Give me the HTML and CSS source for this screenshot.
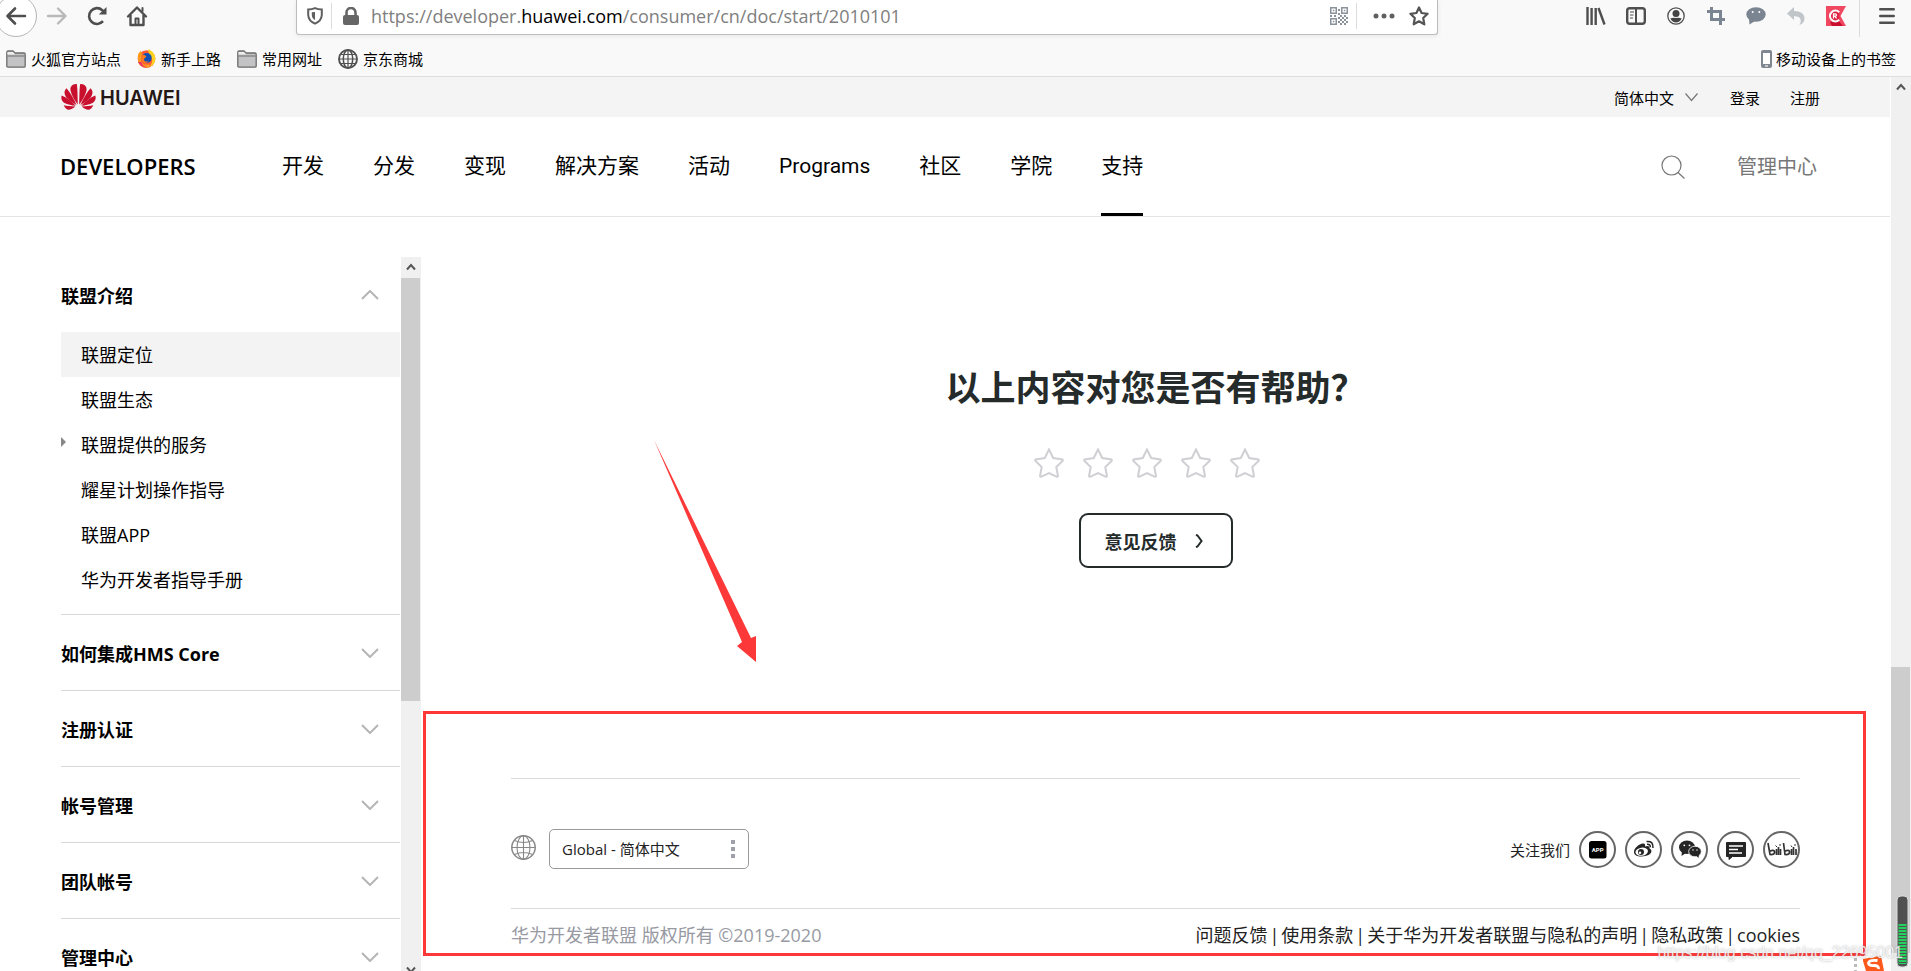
FILE: index.html
```html
<!DOCTYPE html>
<html lang="zh-CN">
<head>
<meta charset="utf-8">
<title>华为开发者联盟</title>
<link rel="stylesheet" href="styles.css">
</head>
<body>
<header class="browser">
  <div class="toolbar">
    <div class="nav-buttons">
      <button class="tool back" aria-label="后退"><svg width="22" height="22" viewBox="0 0 22 22" fill="none" stroke="#4f4f4f" stroke-width="2.6" stroke-linecap="round" stroke-linejoin="round"><path d="M20 11H3M10 3.500L2.500 11L10 18.500"/></svg></button>
      <button class="tool" aria-label="前进"><svg width="22" height="22" viewBox="0 0 22 22" fill="none" stroke="#b9b9b9" stroke-width="2.400" stroke-linecap="round" stroke-linejoin="round"><path d="M2 11H19M12 3.500L19.500 11L12 18.500"/></svg></button>
      <button class="tool" aria-label="刷新"><svg width="22" height="22" viewBox="0 0 22 22" fill="none" stroke="#4f4f4f" stroke-width="2.600"><path d="M17 16.200A7.900 7.900 0 1 1 16.300 5.200L18.500 8"/><path d="M20.500 2V9.600H12.800Z" fill="#4f4f4f" stroke="none"/></svg></button>
      <button class="tool" aria-label="主页"><svg width="22" height="22" viewBox="0 0 22 22" fill="none" stroke="#4f4f4f" stroke-width="2.400" stroke-linejoin="round" stroke-linecap="round"><path d="M2 11.500L11 2.500L20 11.500M4.500 10V20H17.500V10"/><path d="M9.500 19V13.500H12.500V19M16.500 3V6" stroke-width="2"/></svg></button>
    </div>
    <div class="address">
      <svg class="shield" width="16" height="18" viewBox="0 0 16 18" fill="none" stroke="#5f5f5f" stroke-width="2"><path d="M8 1.200Q11 2.600 14.800 2.600V8Q14.500 14 8 16.600Q1.500 14 1.200 8V2.600Q5 2.600 8 1.200Z"/><path d="M8 5V13Q5 11.500 4.800 8V5.300Z" fill="#5f5f5f" stroke="none"/></svg>
      <i class="rule"></i>
      <svg class="lock" width="16" height="18" viewBox="0 0 16 18"><rect y="8" width="16" height="10" rx="2" fill="#666"/><path d="M3.500 9V5.500a4.500 4.500 0 0 1 9 0V9" fill="none" stroke="#666" stroke-width="2.600"/></svg>
      <a class="url" href="#">https://developer.<b>huawei.com</b>/consumer/cn/doc/start/2010101</a>
      <svg class="qr" width="18" height="18" viewBox="0 0 18 18" fill="#8a929c"><path fill-rule="evenodd" d="M0 0H7V7H0ZM1.500 1.500V5.500H5.500V1.500ZM11 0H18V7H11ZM12.500 1.500V5.500H16.500V1.500ZM0 11H7V18H0ZM1.500 12.500V16.500H5.500V12.500Z"/><path d="M2.800 2.800h1.500v1.500H2.800zM13.800 2.800h1.500v1.500h-1.500zM2.800 13.800h1.500v1.500H2.800zM8 2h2v2H8zM8 6h2v2H8zM0 8h2v2H0zM4 8h2v2H4zM10 8h2v2h-2zM14 8h2v2h-2zM8 10h2v2H8zM12 10h2v2h-2zM16 10h2v2h-2zM10 12h2v2h-2zM14 12h2v2h-2zM8 14h2v2H8zM12 14h2v2h-2zM16 14h2v2h-2zM10 16h2v2h-2zM14 16h2v2h-2z"/></svg>
      <i class="rule"></i>
      <button class="tool" aria-label="更多"><svg width="22" height="6" viewBox="0 0 22 6" fill="#606060"><circle cx="3" cy="3" r="2.500"/><circle cx="11" cy="3" r="2.500"/><circle cx="19" cy="3" r="2.500"/></svg></button>
      <button class="tool star-mark" aria-label="收藏"><svg width="20" height="20" viewBox="0 0 20 20" fill="none" stroke="#555" stroke-width="2.200" stroke-linejoin="round"><path d="M10 1.500L12.600 7L18.600 7.800L14.200 12L15.300 18.300L10 15.300L4.700 18.300L5.800 12L1.400 7.800L7.400 7Z"/></svg></button>
    </div>
    <div class="extensions">
      <button class="tool" aria-label="书库"><svg width="20" height="18" viewBox="0 0 20 18" fill="none" stroke="#4f4f4f" stroke-width="2.400"><path d="M1.500 0V18M5.600 1V18M9.700 1V18M12.500 1L18.500 17.500"/></svg></button>
      <button class="tool" aria-label="侧栏"><svg width="20" height="18" viewBox="0 0 20 18" fill="none" stroke="#4f4f4f"><rect x="1.200" y="1.200" width="17.600" height="15.600" rx="2.500" stroke-width="2.400"/><path d="M10 1V17" stroke-width="2"/><path d="M4 5H8M4 8H7.500M4 11H7" stroke-width="1.200"/></svg></button>
      <button class="tool" aria-label="帐户"><svg width="18" height="18" viewBox="0 0 18 18"><circle cx="9" cy="9" r="8.200" fill="none" stroke="#4f4f4f" stroke-width="1.300"/><circle cx="9" cy="6.600" r="3.500" fill="#444"/><path d="M3.300 11.500Q6 10.500 9 11Q12 10.500 14.700 11.500Q12.500 15.500 9 15.500Q5.500 15.500 3.300 11.500Z" fill="#444"/></svg></button>
      <button class="tool" aria-label="截图"><svg width="18" height="18" viewBox="0 0 18 18" fill="none" stroke="#7b8591" stroke-width="3"><path d="M4.500 0V12.500H18M0 4.500H13.500V18"/></svg></button>
      <button class="tool" aria-label="消息"><svg width="20" height="18" viewBox="0 0 20 18"><ellipse cx="10" cy="7.500" rx="9.700" ry="7.300" fill="#7b8591"/><path d="M3 12L3.500 17.500L9 14Z" fill="#7b8591"/><circle cx="6.700" cy="5" r="1" fill="#fff"/><circle cx="13.300" cy="5" r="1" fill="#fff"/></svg></button>
      <button class="tool" aria-label="撤销"><svg width="18" height="18" viewBox="0 0 18 18"><path d="M0 6.500L7 0V4Q17.500 4 17.500 12Q17 16.500 12.500 18Q14.500 15 13.500 12Q12 9 7 9.300V13Z" fill="#c0c5ca"/></svg></button>
      <button class="tool" aria-label="扩展"><svg width="20" height="20" viewBox="0 0 20 20"><path d="M0 0H20L14.500 10L20 20H0Z" fill="#f04860"/><path d="M4 16L12 14L17 20H6Z" fill="#c8102e"/><path d="M13.200 6.200A5.400 5.400 0 1 0 13.200 13.800" fill="#e02040" stroke="#fff" stroke-width="2"/><path d="M7.500 12.500V7.800H9Q10.500 7.800 10.500 9Q10.500 10.200 9 10.200H7.500M9 10.200L10.500 12.500" stroke="#fff" stroke-width="1.300" fill="none"/></svg></button>
      <i class="rule tall"></i>
      <button class="tool menu" aria-label="菜单"><svg width="16" height="18" viewBox="0 0 16 18" stroke="#4f4f4f" stroke-width="2.600" stroke-linecap="round"><path d="M1.300 2.300H14.700M1.300 9H14.700M1.300 15.700H14.700"/></svg></button>
    </div>
  </div>
  <nav class="bookmarks">
    <a href="#"><svg width="20" height="18" viewBox="0 0 20 18"><path d="M.8 16V2.500Q.8 1 2 1H7L9 3H18Q19.200 3 19.200 4.500V16Q19.200 17.200 18 17.200H2Q.8 17.200 .8 16Z" fill="#c3c3c5" stroke="#6c6c6c" stroke-width="1.300"/><path d="M1.500 6H18.500" stroke="#6c6c6c"/><path d="M1.500 2H7L9 4.500H1.500Z" fill="#eee"/></svg>火狐官方站点</a>
    <a href="#"><svg width="19" height="19" viewBox="0 0 19 19"><circle cx="9.500" cy="10" r="8.800" fill="#ff5a36"/><path d="M11.500 0Q18.600 4 18.400 10Q18 16 12 18Q17 13 14 8Q11 5 11.500 0Z" fill="#ffd21f"/><path d="M.8 8Q1 4 3.500 2L5 4L4 13Q7 17 12 15L13 18Q5 20.500 1.500 14Z" fill="#ff9a1f"/><path d="M1 13Q4 19 11 18.700Q6 18 4 13Z" fill="#f02f70"/><circle cx="9.700" cy="9" r="5" fill="#124fb5"/><path d="M4.500 6Q8 5 9.500 8Q6 9 7.500 12Q9 13 12 12Q9 15.500 5.500 13Q3.500 10 4.500 6Z" fill="#ff7a1c"/></svg>新手上路</a>
    <a href="#"><svg width="20" height="18" viewBox="0 0 20 18"><path d="M.8 16V2.500Q.8 1 2 1H7L9 3H18Q19.200 3 19.200 4.500V16Q19.200 17.200 18 17.200H2Q.8 17.200 .8 16Z" fill="#c3c3c5" stroke="#6c6c6c" stroke-width="1.300"/><path d="M1.500 6H18.500" stroke="#6c6c6c"/><path d="M1.500 2H7L9 4.500H1.500Z" fill="#eee"/></svg>常用网址</a>
    <a href="#"><svg width="20" height="20" viewBox="0 0 20 20" fill="none" stroke="#505050" stroke-width="1.500"><circle cx="10" cy="10" r="9" stroke-width="1.900"/><ellipse cx="10" cy="10" rx="4.700" ry="9"/><path d="M1 10H19M3 5.500H17M3 14.500H17M10 1V19" stroke-width="1.200"/></svg>京东商城</a>
    <a class="mobile" href="#"><svg width="11" height="18" viewBox="0 0 11 18"><rect width="11" height="18" rx="2" fill="#7f8790"/><rect x="2" y="3" width="7" height="11" fill="#fff"/><rect x="4" y="15.200" width="3" height="1.500" fill="#ddd"/></svg>移动设备上的书签</a>
  </nav>
</header>

<div class="viewport">
  <div class="page">
    <div class="topbar">
      <a class="brand" href="#" aria-label="HUAWEI">
        <svg width="35" height="26" viewBox="0 0 35 26" fill="#c8102e"><g id="petals"><path d="M16.800 20.500C16.600 12 16.500 4 15.800 0C11 -.2 9 2.800 9.500 6.500C10.500 11 13.500 16.500 16.800 20.500Z"/><path d="M15.600 21C12.500 14 9 8 5.500 4.200C3.500 5.800 3 8.500 4 11C5.500 15 11 18.500 15.600 21Z"/><path d="M14.800 21.700C10.500 17.500 5.500 13.500 .8 11.500C-.3 14 .5 17 3.500 19C6 20.500 11 21.500 14.800 21.700Z"/><path d="M14.200 22.500C10 22.300 6 22 2.700 21.200C4 24.500 6.500 26.300 9 25.500C11 25 13 23.800 14.200 22.500Z"/></g><use href="#petals" transform="matrix(-1 0 0 1 35 0)"/></svg>
        <span>HUAWEI</span>
      </a>
      <div class="account">
        <button class="lang">简体中文<svg width="13" height="9" viewBox="0 0 13 9" fill="none" stroke="#777" stroke-width="1.200"><path d="M.5 .5L6.500 7.500L12.500 .5"/></svg></button>
        <a href="#">登录</a>
        <a href="#">注册</a>
      </div>
    </div>
    <div class="header">
      <a class="site" href="#">DEVELOPERS</a>
      <nav class="menu-main">
        <a href="#">开发</a><a href="#">分发</a><a href="#">变现</a><a href="#">解决方案</a><a href="#">活动</a><a href="#">Programs</a><a href="#">社区</a><a href="#">学院</a><a class="current" href="#">支持</a>
      </nav>
      <button class="search" aria-label="搜索"><svg width="24" height="24" viewBox="0 0 24 24" fill="none" stroke="#777" stroke-width="1.200"><circle cx="10.500" cy="10.500" r="9.500"/><path d="M17 17.500L23.500 23.500"/></svg></button>
      <a class="console" href="#">管理中心</a>
    </div>

    <div class="body">
      <aside class="sidebar">
        <div class="tree">
          <section>
            <button class="group">联盟介绍<svg width="18" height="10" viewBox="0 0 18 10"><path d="M1 9L9 1L17 9"/></svg></button>
            <ul>
              <li class="active"><a href="#">联盟定位</a></li>
              <li><a href="#">联盟生态</a></li>
              <li class="parent"><a href="#">联盟提供的服务</a></li>
              <li><a href="#">耀星计划操作指导</a></li>
              <li><a href="#">联盟APP</a></li>
              <li><a href="#">华为开发者指导手册</a></li>
            </ul>
          </section>
          <section><button class="group">如何集成HMS Core<svg width="18" height="10" viewBox="0 0 18 10"><path d="M1 1L9 9L17 1"/></svg></button></section>
          <section><button class="group">注册认证<svg width="18" height="10" viewBox="0 0 18 10"><path d="M1 1L9 9L17 1"/></svg></button></section>
          <section><button class="group">帐号管理<svg width="18" height="10" viewBox="0 0 18 10"><path d="M1 1L9 9L17 1"/></svg></button></section>
          <section><button class="group">团队帐号<svg width="18" height="10" viewBox="0 0 18 10"><path d="M1 1L9 9L17 1"/></svg></button></section>
          <section><button class="group">管理中心<svg width="18" height="10" viewBox="0 0 18 10"><path d="M1 1L9 9L17 1"/></svg></button></section>
        </div>
        <div class="scrollbar">
          <svg class="cap" width="10" height="8" viewBox="0 0 10 8"><path d="M1 6.500L5 2L9 6.500"/></svg>
          <i class="thumb tree-thumb"></i>
          <i class="tree-rest"></i>
          <svg class="tail" width="10" height="8" viewBox="0 0 10 8"><path d="M1 1.500L5 6L9 1.500"/></svg>
        </div>
      </aside>

      <main class="main">
        <section class="feedback">
          <h1>以上内容对您是否有帮助？</h1>
          <div class="stars">
            <button aria-label="1 星"><svg width="30" height="30" viewBox="0 0 30 30"><path id="star" d="M15 1.500Q17 5.500 19.200 10L28.500 11.500Q29.300 12.200 28.500 13L22.300 19L24 28Q23.500 29 22.500 28.600L15 25L7.500 28.600Q6.500 29 6 28L7.700 19L1.500 13Q.7 12.200 1.500 11.500L10.800 10Q13 5.500 15 1.500Z"/></svg></button>
            <button aria-label="2 星"><svg width="30" height="30" viewBox="0 0 30 30"><use href="#star"/></svg></button>
            <button aria-label="3 星"><svg width="30" height="30" viewBox="0 0 30 30"><use href="#star"/></svg></button>
            <button aria-label="4 星"><svg width="30" height="30" viewBox="0 0 30 30"><use href="#star"/></svg></button>
            <button aria-label="5 星"><svg width="30" height="30" viewBox="0 0 30 30"><use href="#star"/></svg></button>
          </div>
          <button class="opinion">意见反馈<svg width="8" height="14" viewBox="0 0 8 14" fill="none" stroke="#252b2b" stroke-width="2"><path d="M1 .8L2.500 1.500L6.500 7L2.500 12.500L1 13.200"/></svg></button>
          <svg class="arrow" width="103" height="223" viewBox="0 0 103 223"><path d="M0 0L97 198L102 196V222L83 206L88 202Z" fill="#fc3838"/></svg>
        </section>
        <footer class="footer">
          <div class="channels">
            <label for="region" aria-label="地区"><svg width="25" height="25" viewBox="0 0 25 25" fill="none" stroke="#888" stroke-width="1.100"><circle cx="12.500" cy="12.500" r="11.700" stroke-width="1.500"/><ellipse cx="12.500" cy="12.500" rx="6.500" ry="11.700"/><path d="M12.500 1V24M1 12.500H24M3.500 5.500Q12.500 9.500 21.500 5.500M3.500 19.500Q12.500 15.500 21.500 19.500"/></svg></label>
            <div class="region">
              <select id="region"><option>Global - 简体中文</option></select>
              <svg class="dots" width="4" height="18" viewBox="0 0 4 18" fill="#a0a0ac"><path d="M0 0H4V4H0ZM0 7H4V11H0ZM0 14H4V18H0Z"/></svg>
            </div>
            <span class="follow">关注我们</span>
            <a class="social" href="#" aria-label="应用"><svg viewBox="0 0 37 37"><rect x="10" y="10" width="17.500" height="17.500" rx="2.500" fill="#000"/><text x="18.700" y="21.200" text-anchor="middle" class="app-text">APP</text></svg></a>
            <a class="social" href="#" aria-label="微博"><svg viewBox="0 0 37 37"><path d="M9 21C9 17 14 13 18 12.500C20 12.300 20.500 14 20 15.500C22 14.600 25 14.600 24.500 17.500C27 18.500 27 21 25 23C22 25.800 9 27.500 9 21Z" fill="#252525"/><ellipse cx="16.700" cy="20.700" rx="6.300" ry="4.100" fill="#fff" transform="rotate(-8 16.700 20.700)"/><circle cx="16" cy="21" r="3" fill="#252525"/><circle cx="15" cy="21.800" r="1.200" fill="#fff"/><path d="M21.500 10.500Q28.500 9.500 28 17M22 13.300Q25.500 13 25.300 16.300" fill="none" stroke="#252525" stroke-width="1.500"/></svg></a>
            <a class="social" href="#" aria-label="微信"><svg viewBox="0 0 37 37" fill="#252525"><ellipse cx="16" cy="16.300" rx="8" ry="6.700"/><path d="M11 20L10.500 25L15 22Z"/><ellipse cx="24" cy="20.500" rx="6.300" ry="5.300" stroke="#fff" stroke-width=".8"/><path d="M25 24.500L27.500 27L28 22.500Z"/><g fill="#fff"><circle cx="13.300" cy="14.300" r=".9"/><circle cx="18.500" cy="14.300" r=".9"/><circle cx="22" cy="19" r=".7"/><circle cx="26" cy="19" r=".7"/></g></svg></a>
            <a class="social" href="#" aria-label="论坛"><svg viewBox="0 0 37 37"><path d="M9.500 11.500H28.500V25.500H15.500L12 28.500V25.500H9.500Z" fill="#252525" stroke="#252525" stroke-linejoin="round"/><path d="M12 15H26M12 18.500H21M12 22H25" stroke="#fff" stroke-width="1.400"/></svg></a>
            <a class="social" href="#" aria-label="bilibili"><svg viewBox="0 0 37 37" fill="none" stroke="#333" stroke-width="1.700"><path d="M5 12L7 23.500Q12 24 11.500 20.500Q11 18.500 7 20M20.500 12L22 23.500Q27 24 26.500 20.500Q26 18.500 22 20M13.500 18V24M15.500 16V24M17.500 18V24M28.500 18V24M30.500 16V24M33 18V24"/><path d="M12.500 14.500L14 16M17 13V15M28 14.500L29 16M32 13V15" stroke-width="1"/></svg></a>
          </div>
          <div class="legal">
            <span class="copyright">华为开发者联盟 版权所有 ©2019-2020</span>
            <nav><a href="#">问题反馈</a><a href="#">使用条款</a><a href="#">关于华为开发者联盟与隐私的声明</a><a href="#">隐私政策</a><a href="#">cookies</a></nav>
          </div>
          <div class="highlight"></div>
        </footer>
      </main>
    </div>
  </div>
  <div class="scrollbar page-scroll">
    <svg class="cap" width="10" height="8" viewBox="0 0 10 8"><path d="M1 6.500L5 2L9 6.500"/></svg>
    <i class="page-lead"></i>
    <i class="thumb page-thumb"></i>
    <i class="page-rest"></i>
  </div>
</div>

<svg class="desktop" width="56" height="76" viewBox="0 0 56 76">
  <path d="M1.500 63V76" stroke="#bbb" stroke-width="3" stroke-dasharray="3 3"/>
  <path d="M9 64L25 61Q27 61 27.500 63L30 76H12L9 66Z" fill="#fb5a1c"/>
  <path d="M23.500 65.500Q15 64.500 14.500 68Q15 71 20 70.500Q25 70.500 24.500 74" fill="none" stroke="#fff" stroke-width="2.800"/>
  <rect x="43" y="1" width="11" height="71" rx="4" fill="#505050" stroke="#ddd"/>
  <path d="M44.500 29H52.500V69H44.500Z" fill="#26d060"/>
  <path d="M48.500 31V68" stroke="#505050" stroke-width="8" stroke-dasharray="1 2"/>
</svg>
<div class="watermark">https://blog.csdn.net/qq_22695001</div>
</body>
</html>
```

FILE: styles.css
```css
* { box-sizing: border-box; }

body {
  margin: 0;
  height: 100vh;
  display: flex;
  flex-direction: column;
  overflow: hidden;
  position: relative;
  background: #fff;
  color: #000;
  font-family: "Open Sans", "Noto Sans CJK SC", sans-serif;
  font-size: 18px;
}

a { color: inherit; text-decoration: none; }
button, select { font: inherit; color: inherit; }
button { background: none; border: 0; padding: 0; margin: 0; }
svg { display: block; flex: none; }
i { display: block; }

/* Browser chrome */
.browser {
  flex: none;
  background: #f9f9fa;
  border-bottom: 1px solid #dfdfdf;
}
.toolbar { display: flex; height: 35px; }
.nav-buttons {
  display: flex;
  width: 296px;
  height: 32px;
}
.tool {
  width: 40px;
  height: 32px;
  display: flex;
  align-items: center;
  justify-content: center;
  flex: none;
}
.back {
  width: 42px;
  height: 42px;
  margin: -5px 0 0 -5px;
  border: 1px solid #b5b5b5;
  border-radius: 50%;
  background: #fff;
}
.address {
  flex: 1;
  display: flex;
  align-items: center;
  padding: 0 0 2px 10px;
  background: #fff;
  border: 1px solid #bdbdbd;
  border-top: 0;
  border-radius: 0 0 3px 3px;
  box-shadow: 0 1px 5px rgba(0, 0, 0, .08);
}
.rule { width: 1px; height: 26px; background: #dcdcdc; flex: none; }
.shield { margin-right: 8px; }
.lock { margin: 0 12px 0 11px; }
.url {
  flex: 1;
  color: #808080;
  line-height: 24px;
}
.url b { color: #000; font-weight: 400; }
.qr { margin-right: 8px; }
.address .tool { margin-left: 7px; }
.address .star-mark { margin: 0 -2px 0 -5px; }
.extensions {
  display: flex;
  width: 473px;
  height: 32px;
  padding-left: 138px;
}
.tall { height: 37px; margin-left: 3px; }
.menu { width: 54px; }

.bookmarks {
  display: flex;
  align-items: center;
  height: 41px;
  padding: 6px 15px 0 6px;
  gap: 16px;
  font-size: 15px;
}
.bookmarks a { display: flex; align-items: center; gap: 5px; }
.bookmarks .mobile { margin-left: auto; gap: 4px; }

/* Page */
.viewport { flex: 1; display: flex; min-height: 0; }
.page {
  flex: 1;
  display: flex;
  flex-direction: column;
  min-width: 0;
}
.topbar {
  flex: none;
  display: flex;
  align-items: center;
  justify-content: space-between;
  height: 40px;
  padding: 0 70px 0 61px;
  background: #f4f4f4;
  font-size: 15px;
}
.brand {
  display: flex;
  align-items: flex-end;
  gap: 4px;
  font: 600 20px/24px Inter, sans-serif;
  color: #231815;
}
.account { display: flex; align-items: center; gap: 30px; }
.lang { display: flex; align-items: center; gap: 11px; margin-right: 2px; }

.header {
  flex: none;
  display: flex;
  height: 100px;
  padding: 0 73px 0 60px;
  border-bottom: 1px solid #e5e5e5;
  line-height: 99px;
}
.site {
  width: 222px;
  font-size: 22px;
  font-weight: 600;
}
.menu-main {
  flex: 1;
  display: flex;
  gap: 49px;
  font-family: Roboto, "Noto Sans CJK SC", sans-serif;
  font-size: 21px;
}
.current { box-shadow: inset 0 -3px #000; }
.search { margin-right: 52px; }
.console {
  color: #777;
  font-size: 20px;
}

.body { flex: 1; display: flex; min-height: 0; }

/* Sidebar */
.sidebar {
  flex: none;
  display: flex;
  padding: 40px 0 0 61px;
}
.tree { width: 340px; padding-right: 1px; overflow: hidden; }
.tree section + section { border-top: 1px solid #d8d8d8; }
.group {
  display: flex;
  align-items: center;
  justify-content: space-between;
  width: 100%;
  height: 75px;
  padding-right: 21px;
  font-weight: 700;
}
.group svg { fill: none; stroke: #b5b5b5; stroke-width: 2; }
.tree ul { list-style: none; margin: 0; padding: 0 0 12px; }
.tree li { position: relative; height: 45px; padding-left: 20px; line-height: 47px; }
.tree .active { background: #f3f3f3; }
.parent::before {
  content: "";
  position: absolute;
  left: 0;
  top: 15px;
  border: 5px solid transparent;
  border-left-color: #888;
  border-right: 0;
}

.scrollbar {
  flex: none;
  width: 20px;
  display: flex;
  flex-direction: column;
  background: #f0f0f0;
}
.scrollbar svg { align-self: center; fill: none; stroke: #555; stroke-width: 2; }
.cap { margin: 6px 0 7px; }
.thumb { background: #cdcdcd; margin-right: 1px; }
.tree-thumb { flex: 423; }
.tree-rest { flex: 265; }
.tail { margin-bottom: -3px; }
.page-scroll { border-left: 1px solid #fff; width: 21px; }
.page-lead { flex: 569; }
.page-thumb { flex: 286; }
.page-rest { flex: 18; }

/* Main column */
.main { flex: 1; min-width: 0; }
.feedback {
  position: relative;
  display: flex;
  flex-direction: column;
  align-items: center;
  padding: 147px 0 210px;
  color: #252b2b;
}
.feedback h1 {
  margin: 0 0 36px;
  font-size: 35px;
  line-height: 48px;
  font-weight: 700;
}
.stars { display: flex; gap: 19px; padding-right: 18px; margin-bottom: 35px; }
.stars svg { fill: none; stroke: #cfcfd4; stroke-width: 2; }
.opinion {
  display: flex;
  align-items: center;
  gap: 18px;
  height: 55px;
  padding: 0 28px 0 24px;
  border: 2px solid #252b2b;
  border-radius: 9px;
  font-weight: 700;
}
.arrow { position: absolute; left: 233px; top: 223px; }

.footer {
  position: relative;
  margin: 0 90px;
  border-top: 1px solid #dadada;
  color: #222;
}
.channels {
  display: flex;
  align-items: center;
  padding: 50px 0 39px;
  border-bottom: 1px solid #dadada;
  font-size: 15px;
}
.channels label { padding-bottom: 4px; }
.region { position: relative; margin: 0 auto 0 13px; }
.region select {
  display: block;
  appearance: none;
  width: 200px;
  height: 40px;
  padding: 0 12px;
  border: 1px solid #999;
  border-radius: 5px;
  background: #fff;
}
.dots { position: absolute; right: 14px; top: 11px; pointer-events: none; }
.social {
  width: 37px;
  height: 37px;
  margin-left: 9px;
  border: 2px solid #666;
  border-radius: 50%;
}
.social svg { width: 37px; height: 37px; margin: -2px; }
.app-text { fill: #fff; font: 700 6px Roboto, sans-serif; }
.legal {
  display: flex;
  justify-content: space-between;
  line-height: 52px;
}
.copyright { color: #979aa3; }
.legal nav { display: flex; align-items: center; }
.legal a + a::before {
  content: "|";
  margin: 0 2px;
}
.highlight {
  position: absolute;
  top: -68px;
  bottom: 5px;
  left: -88px;
  right: -66px;
  border: 3px solid #fc3838;
  pointer-events: none;
}

/* Desktop overlays */
.desktop { position: absolute; right: 1px; bottom: 0; }
.watermark {
  position: absolute;
  right: 8px;
  bottom: 8px;
  font: 16px/20px "Liberation Sans", Arial, sans-serif;
  color: rgba(255, 255, 255, .8);
  text-shadow: 0 0 2px rgba(120, 120, 120, .6);
}
```
